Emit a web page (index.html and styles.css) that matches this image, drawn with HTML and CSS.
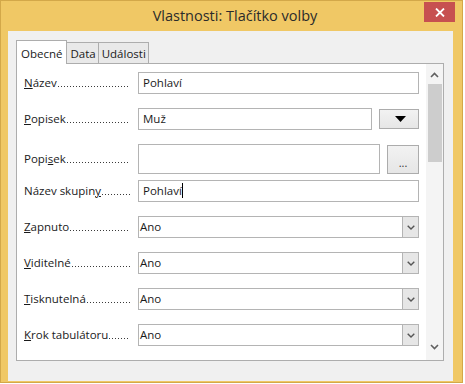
FILE: index.html
```html
<!DOCTYPE html>
<html lang="cs">
<head>
  <meta charset="UTF-8">
  <meta name="viewport" content="width=device-width, initial-scale=1.0">
  <title>Vlastnosti: Tlačítko volby</title>
  <link rel="stylesheet" href="styles.css">
</head>
<body>
  <div class="window">
    <div class="titlebar">
      <span></span>
      <div class="title">Vlastnosti: Tlačítko volby</div>
      <button class="close" type="button">
        <svg width="10" height="9" viewBox="0 0 10 9"><path d="M1 0.5 L9 8.5 M9 0.5 L1 8.5" stroke="#fff" stroke-width="1.8"/></svg>
      </button>
    </div>

    <div class="content">
      <div class="tabs">
        <div class="tab active">Obecné</div>
        <div class="tab">Data</div>
        <div class="tab">Události</div>
      </div>

      <div class="panel">
        <div class="form">
          <div class="row">
            <label class="label"><span class="name"><u>N</u>ázev</span><span class="dots"></span></label>
            <div class="field"><div class="input">Pohlaví</div></div>
          </div>

          <div class="row">
            <label class="label"><span class="name"><u>P</u>opisek</span><span class="dots"></span></label>
            <div class="field">
              <div class="input">Muž</div>
              <button class="btn btn-menu" type="button">
                <svg width="11" height="6" viewBox="0 0 11 6"><path d="M0 0 H11 L5.5 6 Z" fill="#000"/></svg>
              </button>
            </div>
          </div>

          <div class="row row-tall">
            <label class="label"><span class="name">Popi<u>s</u>ek</span><span class="dots"></span></label>
            <div class="field">
              <div class="input"></div>
              <button class="btn btn-more" type="button">...</button>
            </div>
          </div>

          <div class="row">
            <label class="label"><span class="name">Název skupin<u>y</u></span><span class="dots"></span></label>
            <div class="field"><div class="input">Pohlaví<span class="caret"></span></div></div>
          </div>

          <div class="row">
            <label class="label"><span class="name"><u>Z</u>apnuto</span><span class="dots"></span></label>
            <div class="field">
              <div class="select"><span class="value">Ano</span><span class="drop"><svg width="8" height="5" viewBox="0 0 8 5"><path d="M0.7 0.7 L4 4 L7.3 0.7" fill="none" stroke="#555" stroke-width="1.4"/></svg></span></div>
            </div>
          </div>

          <div class="row">
            <label class="label"><span class="name"><u>V</u>iditelné</span><span class="dots"></span></label>
            <div class="field">
              <div class="select"><span class="value">Ano</span><span class="drop"><svg width="8" height="5" viewBox="0 0 8 5"><path d="M0.7 0.7 L4 4 L7.3 0.7" fill="none" stroke="#555" stroke-width="1.4"/></svg></span></div>
            </div>
          </div>

          <div class="row">
            <label class="label"><span class="name"><u>T</u>isknutelná</span><span class="dots"></span></label>
            <div class="field">
              <div class="select"><span class="value">Ano</span><span class="drop"><svg width="8" height="5" viewBox="0 0 8 5"><path d="M0.7 0.7 L4 4 L7.3 0.7" fill="none" stroke="#555" stroke-width="1.4"/></svg></span></div>
            </div>
          </div>

          <div class="row">
            <label class="label"><span class="name"><u>K</u>rok tabulátoru</span><span class="dots"></span></label>
            <div class="field">
              <div class="select"><span class="value">Ano</span><span class="drop"><svg width="8" height="5" viewBox="0 0 8 5"><path d="M0.7 0.7 L4 4 L7.3 0.7" fill="none" stroke="#555" stroke-width="1.4"/></svg></span></div>
            </div>
          </div>
        </div>

        <!-- vertical scrollbar -->
        <div class="scrollbar">
          <div class="arrow"><svg width="9" height="6" viewBox="0 0 9 6"><path d="M1 5 L4.5 1.5 L8 5" fill="none" stroke="#606060" stroke-width="1.6"/></svg></div>
          <div class="track"><div class="thumb"></div></div>
          <div class="arrow"><svg width="9" height="6" viewBox="0 0 9 6"><path d="M1 1 L4.5 4.5 L8 1" fill="none" stroke="#606060" stroke-width="1.6"/></svg></div>
        </div>
      </div>
    </div>
  </div>
</body>
</html>
```

FILE: styles.css
```css
body {
  margin: 0;
  padding: 0;
  background-color: #ffffff;
  font-family: "Open Sans", "Noto Sans", sans-serif;
  font-size: 11.5px;
  color: #1a1a1a;
}
.window {
  width: 463px;
  height: 383px;
  box-sizing: border-box;
  border: 1px solid #d3a849;
  background-color: #f0c865;
  padding: 0 9px 5px 7px;
  display: flex;
  flex-direction: column;
}
.titlebar {
  height: 30px;
  display: grid;
  grid-template-columns: 1fr auto 1fr;
  align-items: start;
  margin-right: -9px;
}
.title {
  font-size: 14.5px;
  color: #2b2b2b;
  line-height: 30px;
}
.close {
  justify-self: end;
  width: 31px;
  height: 20px;
  margin: 1px 7px 0 0;
  padding: 0;
  border: 0;
  background-color: #c75050;
  display: flex;
  align-items: center;
  justify-content: center;
}
.content {
  flex: 1;
  background-color: #f0f0f0;
  padding: 9px 9px 20px 8px;
  display: flex;
  flex-direction: column;
}
.tabs {
  display: flex;
  align-items: flex-end;
  height: 23px;
  position: relative;
  z-index: 1;
}
.tab {
  box-sizing: border-box;
  height: 21px;
  padding: 0 2px 0 3px;
  border: 1px solid #adadad;
  border-bottom: 0;
  border-left: 0;
  background-color: #e9e9e9;
  line-height: 21px;
}
.tab.active {
  height: 24px;
  margin-bottom: -1px;
  padding: 0 4px;
  border-left: 1px solid #adadad;
  background-color: #ffffff;
  line-height: 25px;
}
.panel {
  flex: 1;
  background-color: #ffffff;
  border: 1px solid #adadad;
  display: flex;
}
.form {
  flex: 1;
  padding: 8px 7px 0 7px;
}
.row {
  display: flex;
  align-items: center;
  height: 22px;
  margin-bottom: 14px;
}
.row-tall {
  height: 30px;
  margin-bottom: 6px;
}
.label {
  width: 114px;
  padding-right: 8px;
  box-sizing: border-box;
  display: flex;
  line-height: 16px;
  white-space: nowrap;
}
/* dotted leader after the label text */
.dots {
  flex: 1;
  margin-left: 1px;
  background-image: linear-gradient(to right, #3a3a3a 1px, transparent 1px);
  background-size: 3px 1px;
  background-repeat: repeat-x;
  background-position: left bottom 4px;
}
.field {
  flex: 1;
  display: flex;
  align-items: center;
  gap: 7px;
  height: 100%;
}
.input {
  flex: 1;
  box-sizing: border-box;
  height: 22px;
  border: 1px solid #b4b4b4;
  padding-left: 4px;
  line-height: 20px;
  background-color: #ffffff;
}
.row-tall .input {
  height: 30px;
}
.caret {
  display: inline-block;
  width: 1px;
  height: 15px;
  background-color: #000;
  vertical-align: -3px;
}
.btn {
  box-sizing: border-box;
  border: 1px solid #acacac;
  background: linear-gradient(#f2f2f2, #e6e6e6);
  padding: 0;
  font-family: inherit;
}
.btn-menu {
  width: 40px;
  height: 20px;
  display: flex;
  align-items: center;
  justify-content: flex-end;
  padding-right: 12px;
}
.btn-more {
  width: 32px;
  height: 29px;
  font-size: 11px;
  color: #333;
  padding-top: 6px;
}
.select {
  flex: 1;
  box-sizing: border-box;
  height: 22px;
  border: 1px solid #b4b4b4;
  display: flex;
  background-color: #ffffff;
}
.value {
  flex: 1;
  padding-left: 1px;
  line-height: 20px;
}
.drop {
  width: 15px;
  border-left: 1px solid #b4b4b4;
  background-color: #e6e6e6;
  display: flex;
  align-items: center;
  justify-content: center;
}
.scrollbar {
  width: 17px;
  padding: 2px 0 4px;
  box-sizing: border-box;
  background-color: #f4f4f4;
  display: flex;
  flex-direction: column;
}
.arrow {
  height: 18px;
  display: flex;
  align-items: center;
  justify-content: center;
}
.track {
  flex: 1;
  padding: 0 1px 0 2px;
}
.thumb {
  height: 78px;
  background-color: #cdcdcd;
}
```
